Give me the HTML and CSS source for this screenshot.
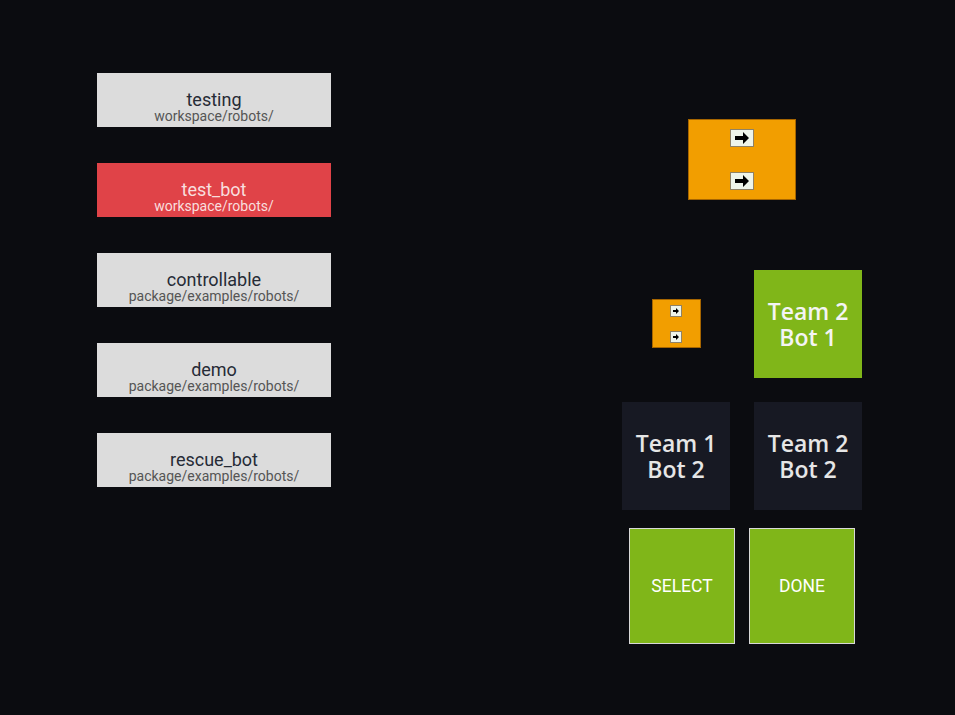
FILE: index.html
```html
<!DOCTYPE html>
<html>
<head>
<meta charset="utf-8">
<link rel="stylesheet" href="styles.css">
</head>
<body>
<div class="page">
  <div class="list">
    <div class="item"><span class="title">testing</span><span class="sub">workspace/robots/</span></div>
    <div class="item active"><span class="title">test_bot</span><span class="sub">workspace/robots/</span></div>
    <div class="item"><span class="title">controllable</span><span class="sub">package/examples/robots/</span></div>
    <div class="item"><span class="title">demo</span><span class="sub">package/examples/robots/</span></div>
    <div class="item"><span class="title">rescue_bot</span><span class="sub">package/examples/robots/</span></div>
  </div>
  <div class="panel">
    <div class="hub">
      <svg class="port" width="24" height="18" viewBox="0 0 24 18"><rect x="0.5" y="0.5" width="23" height="17" fill="#eef4ea" stroke="#8f8266"/><polygon points="5,7 13,7 13,3 19,9 13,15 13,11 5,11" fill="#000"/></svg>
      <svg class="port" width="24" height="18" viewBox="0 0 24 18"><rect x="0.5" y="0.5" width="23" height="17" fill="#eef4ea" stroke="#8f8266"/><polygon points="5,7 13,7 13,3 19,9 13,15 13,11 5,11" fill="#000"/></svg>
    </div>
    <div class="grid">
      <div class="cell">
        <div class="hub-small">
          <svg width="12" height="12" viewBox="0 0 12 12"><rect x="0.5" y="0.5" width="11" height="11" fill="#eef4ea" stroke="#8f8266"/><polygon points="3,5 6,5 6,3 9,6 6,9 6,7 3,7" fill="#000"/></svg>
          <svg width="12" height="12" viewBox="0 0 12 12"><rect x="0.5" y="0.5" width="11" height="11" fill="#eef4ea" stroke="#8f8266"/><polygon points="3,5 6,5 6,3 9,6 6,9 6,7 3,7" fill="#000"/></svg>
        </div>
      </div>
      <div class="tile green">Team 2<br>Bot 1</div>
      <div class="tile dark">Team 1<br>Bot 2</div>
      <div class="tile dark">Team 2<br>Bot 2</div>
    </div>
    <div class="buttons">
      <div class="btn">SELECT</div>
      <div class="btn">DONE</div>
    </div>
  </div>
</div>
</body>
</html>
```
FILE: styles.css
```css
html, body {
  margin: 0;
  padding: 0;
}
body {
  background: #0b0c10;
  width: 955px;
  height: 715px;
  overflow: hidden;
  font-family: Roboto, "Liberation Sans", sans-serif;
}
.page {
  display: flex;
  padding-left: 97px;
}
.list {
  width: 234px;
  padding-top: 73px;
  display: flex;
  flex-direction: column;
  gap: 36px;
}
.item {
  box-sizing: border-box;
  height: 54px;
  background: #dcdcdc;
  display: flex;
  flex-direction: column;
  justify-content: flex-end;
  align-items: center;
  padding-bottom: 3px;
}
.title {
  font-size: 18px;
  line-height: 18px;
  color: #262b36;
}
.sub {
  font-size: 14px;
  line-height: 15px;
  color: #555;
}
.item.active {
  background: #e04348;
}
.item.active .title,
.item.active .sub {
  color: #f8dede;
}
.panel {
  margin-left: 291px;
  width: 240px;
  padding-top: 119px;
  display: flex;
  flex-direction: column;
  align-items: center;
}
.hub {
  box-sizing: border-box;
  width: 108px;
  height: 81px;
  background: #f29e00;
  border: 1px solid #a66500;
  padding: 9px 0;
  display: flex;
  flex-direction: column;
  justify-content: space-between;
  align-items: center;
}
.port { display: block; }
.grid {
  margin-top: 70px;
  display: grid;
  grid-template-columns: 108px 108px;
  grid-auto-rows: 108px;
  gap: 24px;
}
.cell {
  display: flex;
  align-items: center;
  justify-content: center;
  padding-bottom: 1px;
}
.hub-small {
  box-sizing: border-box;
  width: 49px;
  height: 49px;
  background: #f29e00;
  border: 1px solid #a66500;
  padding: 5px 0 4px;
  display: flex;
  flex-direction: column;
  justify-content: space-between;
  align-items: center;
}
.hub-small svg { display: block; }
.tile {
  display: flex;
  align-items: center;
  justify-content: center;
  text-align: center;
  font-family: "Open Sans", "Noto Sans", sans-serif;
  font-weight: 600;
  font-size: 23px;
  line-height: 26px;
  color: #eeeeee;
}
.tile.green { background: #80b619; color: #f4f4f4; }
.tile.dark { background: #171923; color: #e6e6e6; }
.buttons {
  margin-top: 18px;
  display: flex;
  gap: 14px;
}
.btn {
  box-sizing: border-box;
  width: 106px;
  height: 116px;
  background: #80b619;
  border: 1px solid #d8d8d8;
  display: flex;
  align-items: center;
  justify-content: center;
  color: #ffffff;
  font-size: 17.5px;
}
```
